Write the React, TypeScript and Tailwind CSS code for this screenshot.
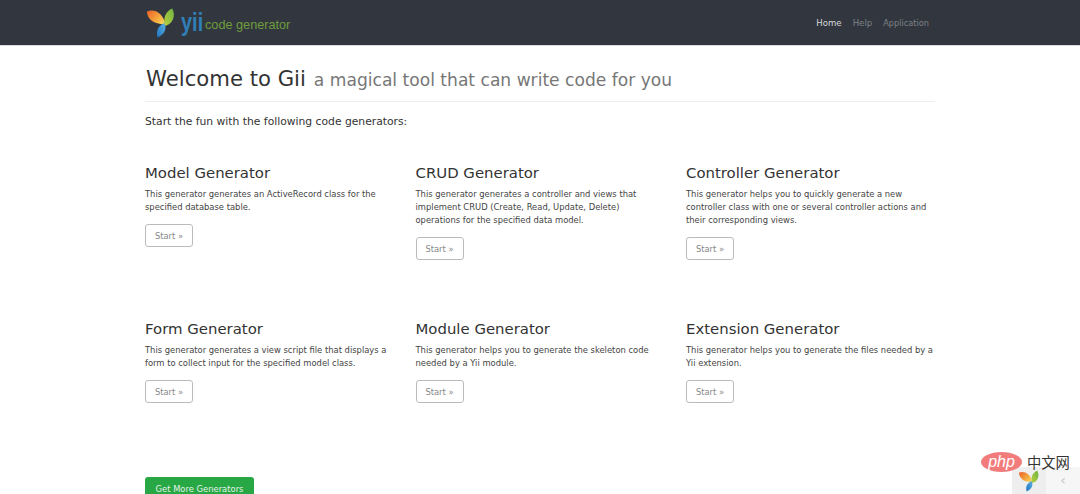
const generators = [
  {
    name: "Model Generator",
    text: "This generator generates an ActiveRecord class for the specified database table.",
  },
  {
    name: "CRUD Generator",
    text: "This generator generates a controller and views that implement CRUD (Create, Read, Update, Delete) operations for the specified data model.",
  },
  {
    name: "Controller Generator",
    text: "This generator helps you to quickly generate a new controller class with one or several controller actions and their corresponding views.",
  },
  {
    name: "Form Generator",
    text: "This generator generates a view script file that displays a form to collect input for the specified model class.",
  },
  {
    name: "Module Generator",
    text: "This generator helps you to generate the skeleton code needed by a Yii module.",
  },
  {
    name: "Extension Generator",
    text: "This generator helps you to generate the files needed by a Yii extension.",
  },
];

function YiiMark({ className }: { className: string }) {
  return (
    <svg viewBox="0 0 30 30" className={className}>
      <defs>
        <linearGradient id="petalLeft" x1="0" y1="0" x2="1" y2="0.7">
          <stop offset="0" stopColor="#ea5f2a" />
          <stop offset="0.6" stopColor="#f3a33c" />
          <stop offset="1" stopColor="#f6d35a" />
        </linearGradient>
        <linearGradient id="petalRight" x1="0" y1="1" x2="1" y2="0">
          <stop offset="0" stopColor="#b9cf3f" />
          <stop offset="1" stopColor="#6fb53f" />
        </linearGradient>
        <linearGradient id="petalBottom" x1="0" y1="1" x2="1" y2="0">
          <stop offset="0" stopColor="#1b74c0" />
          <stop offset="1" stopColor="#5fb0e2" />
        </linearGradient>
      </defs>
      <path d="M0 3 C7 0 17 4 19 17 C16 16 8 16 4 12 C1 9 0 6 0 3 Z" fill="url(#petalLeft)" />
      <path d="M26 0 C30 7 27 16 19 18 C16 11 19 3 26 0 Z" fill="url(#petalRight)" />
      <path d="M18 15 C21 21 18 27 11 30 C9 24 11 18 18 15 Z" fill="url(#petalBottom)" />
    </svg>
  );
}

export default function App() {
  return (
    <div className="relative h-[494px] w-[1080px] overflow-hidden bg-white font-['DejaVu_Sans',sans-serif] text-[#333]">
      {/* Navbar */}
      <div className="flex h-[46px] items-center justify-between border-b border-[#d8dcdc] bg-[#32373f] pl-[147px] pr-[151px]">
        <div className="flex items-center">
          <YiiMark className="h-[30px] w-[29px]" />
          <span className="ml-[5px] w-[20px] origin-left scale-x-[0.8] font-['Liberation_Sans',sans-serif] text-[25px] leading-none font-bold text-[#2f7fb8]">
            yii
          </span>
          <span className="mt-[5px] ml-[4px] font-['Liberation_Sans',sans-serif] text-[12.7px] leading-none text-[#6f9c3c]">
            code generator
          </span>
        </div>
        <div className="mt-[2px] flex items-baseline gap-[11px] text-[8.6px]">
          <span className="font-medium text-[#d6d8da]">Home</span>
          <span className="text-[#7d8186]">Help</span>
          <span className="text-[8.2px] text-[#7d8186]">Application</span>
        </div>
      </div>

      {/* Page */}
      <div className="mx-[145px] w-[790px]">
        <div className="mt-[19px] flex h-[37px] items-baseline gap-[8px] border-b border-[#eee]">
          <h1 className="ml-[1px] text-[21.2px] leading-[27px]">Welcome to Gii</h1>
          <span className="text-[17.1px] text-[#777]">a magical tool that can write code for you</span>
        </div>
        <p className="mt-[13px] text-[10.75px] leading-[14px] font-medium">Start the fun with the following code generators:</p>

        <div className="mt-[34px] grid grid-cols-[270.5px_270.5px_249px]">
          {generators.map((g, i) => (
            <div key={g.name} className={i < 3 ? "h-[156px]" : ""}>
              <h3 className="text-[14.9px] leading-[20px]">{g.name}</h3>
              <p className="mt-[5px] w-[250px] text-[8.38px] leading-[13px] text-[#444]">{g.text}</p>
              <button className="mt-[10px] h-[23px] w-[48px] rounded-[3px] border border-[#bbb] bg-white pt-[1px] text-[8.38px] text-[#888]">
                Start »
              </button>
            </div>
          ))}
        </div>

        <button className="mt-[74px] h-[24px] w-[109px] rounded-[3px] bg-[#28a745] text-[8.38px] text-[#e4f3e7]">
          Get More Generators
        </button>
      </div>

      {/* Site watermark */}
      <div className="absolute right-0 bottom-0 flex h-[27px] w-[68px] bg-[#f6f6f6]">
        <div className="flex w-[34px] items-center justify-center bg-[#eeeeee]">
          <YiiMark className="h-[22px] w-[21px]" />
        </div>
        <div className="flex flex-1 items-center justify-center text-[14px] text-[#c8c8c8]">‹</div>
      </div>
      <div className="absolute top-[452px] left-[981px] flex items-center">
        <span className="flex h-[20px] w-[41px] items-center justify-center rounded-[50%] bg-[#f27c7c] font-['Liberation_Sans',sans-serif] text-[16px] leading-none text-white italic">
          php
        </span>
        <span className="ml-[5px] font-['Noto_Sans_CJK_SC',sans-serif] text-[14.3px] leading-none text-[#333]">中文网</span>
      </div>
    </div>
  );
}
